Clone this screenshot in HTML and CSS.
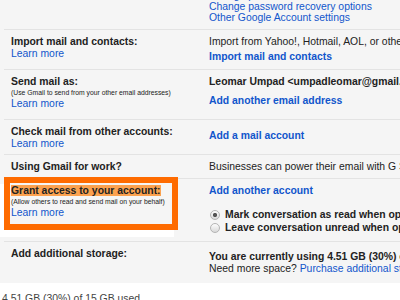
FILE: index.html
```html
<!DOCTYPE html>
<html lang="en">
<head>
    <meta charset="UTF-8">
    <title>Settings - Accounts and Import</title>
    <link rel="stylesheet" href="styles.css">
</head>
<body>
    <div class="settings">
        <div class="row row-account">
            <div class="label">Change account settings:</div>
            <div class="value tight">
                <p><a href="#">Change password</a></p>
                <p><a href="#">Change password recovery options</a></p>
                <p><a href="#">Other Google Account settings</a></p>
            </div>
        </div>

        <div class="row row-import">
            <div class="label">
                Import mail and contacts:
                <p><a href="#" class="learn">Learn more</a></p>
            </div>
            <div class="value">
                <p>Import from Yahoo!, Hotmail, AOL, or other webmail or POP3 accounts.</p>
                <p class="next"><a href="#" class="action">Import mail and contacts</a></p>
            </div>
        </div>

        <div class="row row-send">
            <div class="label">
                Send mail as:
                <p class="hint">(Use Gmail to send from your other email addresses)</p>
                <p><a href="#" class="learn">Learn more</a></p>
            </div>
            <div class="value">
                <p class="strong">Leomar Umpad &lt;umpadleomar@gmail.com&gt;</p>
                <p class="next-wide"><a href="#" class="action">Add another email address</a></p>
            </div>
        </div>

        <div class="row row-check">
            <div class="label">
                Check mail from other accounts:
                <p><a href="#" class="learn">Learn more</a></p>
            </div>
            <div class="value pushed">
                <p><a href="#" class="action">Add a mail account</a></p>
            </div>
        </div>

        <div class="row row-work">
            <div class="label">Using Gmail for work?</div>
            <div class="value">
                <p>Businesses can power their email with G Suite.</p>
            </div>
        </div>

        <div class="row row-grant">
            <div class="label">
                <span class="marked">Grant access to your account:</span>
                <p class="hint">(Allow others to read and send mail on your behalf)</p>
                <p><a href="#" class="learn">Learn more</a></p>
            </div>
            <div class="value">
                <p><a href="#" class="action">Add another account</a></p>
                <div class="choices">
                    <p class="choice strong"><span class="radio on"></span>Mark conversation as read when opened by others</p>
                    <p class="choice strong"><span class="radio"></span>Leave conversation unread when opened by others</p>
                </div>
            </div>
        </div>

        <div class="row row-storage">
            <div class="label">Add additional storage:</div>
            <div class="value nudged">
                <p class="strong">You are currently using 4.51 GB (30%) of your 15 GB.</p>
                <p>Need more space? <a href="#" class="learn">Purchase additional storage</a></p>
            </div>
        </div>
    </div>

    <p class="usage">4.51 GB (30%) of 15 GB used</p>

    <div class="callout"></div>
</body>
</html>
```

FILE: styles.css
```css
body {
    margin: 0;
    font-family: "Liberation Sans", Arial, sans-serif;
    font-size: 10.4px;
    line-height: 12px;
    color: #222;
    background: #fff;
    overflow: hidden;
}
p {
    margin: 0;
}
a {
    color: #15c;
    text-decoration: none;
}
.settings {
    background: #f5f5f5;
    margin-top: -17px;
}
.row {
    display: grid;
    grid-template-columns: 198px 1fr;
    margin-left: 4px;
    padding: 6px 0 0 7px;
    border-top: 1px solid #e3e3e3;
    box-sizing: border-box;
    white-space: nowrap;
    overflow: hidden;
}
.row-account {
    border-top: none;
    height: 46px;
}
.row-import { height: 40px; }
.row-send { height: 50px; }
.row-check { height: 35px; }
.row-work { height: 24px; }
.row-grant { height: 63px; }
.row-storage { height: 42px; }

.label {
    font-weight: bold;
}
.label p {
    font-weight: normal;
}
.hint {
    font-size: 6.8px;
    line-height: 9.5px;
}
.strong,
.action {
    font-weight: bold;
}
.tight {
    line-height: 11px;
    padding-top: 1px;
}
.next {
    margin-top: 3px;
}
.next-wide {
    margin-top: 7px;
}
.pushed {
    padding-top: 4px;
}
.nudged {
    padding-top: 3px;
}
.marked {
    background: #fca24f;
}
.choices {
    margin-top: 12px;
}
.choice {
    display: flex;
    align-items: center;
    gap: 5px;
    margin-left: 1px;
}
.choice + .choice {
    margin-top: 1px;
}
.radio {
    width: 10px;
    height: 10px;
    border-radius: 50%;
    border: 1px solid #b4b4b4;
    box-sizing: border-box;
    background: linear-gradient(#fdfdfd, #d9d9d9);
}
.radio.on {
    background: radial-gradient(circle, #555 0 1.8px, transparent 2.4px), linear-gradient(#fdfdfd, #d9d9d9);
}
.usage {
    margin: 10px 0 0 2px;
    color: #444;
}
.callout {
    position: absolute;
    left: 4px;
    top: 177px;
    width: 174px;
    height: 53px;
    border: 6px solid #fe6b00;
    box-sizing: border-box;
    box-shadow: -4px 7px 0 #fff;
}
```
